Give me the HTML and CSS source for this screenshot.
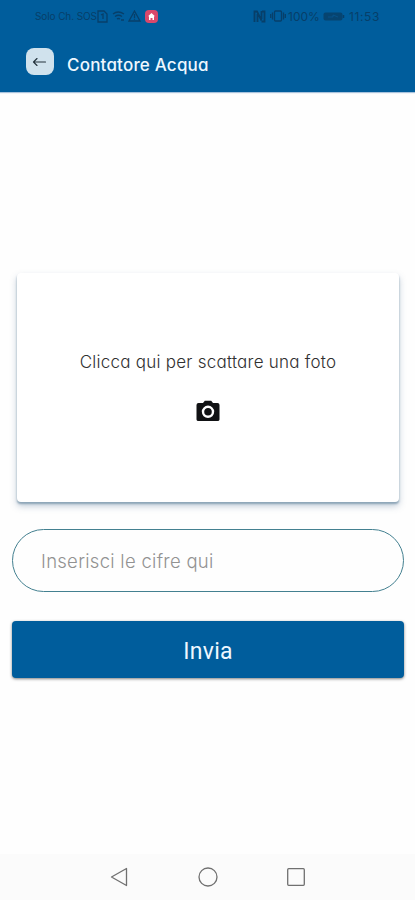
FILE: index.html
```html
<!DOCTYPE html>
<html lang="it">
<head>
<meta charset="utf-8">
<meta name="viewport" content="width=device-width, initial-scale=1">
<title>Contatore Acqua</title>
<link rel="stylesheet" href="styles.css">
</head>
<body>
<div class="screen">
  <header class="header">
    <div class="status">
      <div class="status-left">
        <span class="carrier">Solo Ch. SOS</span>
        <svg width="11" height="13" viewBox="0 0 11 13" fill="none" stroke="currentColor" stroke-width="1.3"><path d="M1 1h6l3 3v8H1zM4 5l2-1v5"/></svg>
        <svg class="wifi" width="13" height="12" viewBox="0 0 13 12" fill="none" stroke="currentColor" stroke-width="1.4"><path d="M1 4q5-4 11 0M3 6.500q3.500-2.500 7 0M5 9q1.500-1 3 0M9 10h3"/></svg>
        <svg class="warning" width="13" height="12" viewBox="0 0 13 12" fill="none" stroke="currentColor" stroke-width="1.3"><path d="M6.500 1L12 11H1zM6.500 4v4M6.500 8.700v1"/></svg>
        <svg class="alert" width="13" height="13" viewBox="0 0 13 13"><rect width="13" height="13" rx="4" fill="#d9486b"/><path d="M6.500 3L10 6.300H9V10H7.500V8h-2v2H4V6.300H3z" fill="#fff"/></svg>
      </div>
      <div class="status-right">
        <svg width="13" height="13" viewBox="0 0 13 13" fill="none" stroke="currentColor" stroke-width="1.800"><path d="M1.500 12V1.500H4l4.500 9M4.500 4v8M8.500 1v8M8.500 11.500h3v-10H9"/></svg>
        <svg class="vibrate" width="16" height="12" viewBox="0 0 16 12" fill="none" stroke="currentColor" stroke-width="1.3"><rect x="4.500" y="1" width="7" height="10" rx="1"/><path d="M2.500 2.500v7M.700 4v4M13.500 2.500v7M15.300 4v4"/></svg>
        <span class="percent">100%</span>
        <svg class="battery" width="22" height="9" viewBox="0 0 22 9"><rect x=".500" y=".500" width="19" height="8" rx="2" fill="currentColor" opacity=".85"/><path d="M20.500 3v3" stroke="currentColor" stroke-width="1.500"/><path d="M5 5h5V3l5 2" stroke="#075b99" fill="none" opacity=".6"/></svg>
        <span class="clock">11:53</span>
      </div>
    </div>
    <div class="title-row">
      <button class="back" aria-label="Indietro">
        <svg width="15" height="12" viewBox="0 0 15 12" fill="none" stroke="#25333d" stroke-width="1.150" stroke-linecap="round" stroke-linejoin="round"><path d="M13.500 6H1.500M5 2.500L1.500 6 5 9.500"/></svg>
      </button>
      <h1 class="title">Contatore Acqua</h1>
    </div>
  </header>
  <main class="content">
    <section class="photo-card">
      <span class="photo-label">Clicca qui per scattare una foto</span>
      <svg class="camera" width="24" height="22" viewBox="0 0 24 22"><path d="M2.500 3H7L8.800.800h6.400L17 3h4.500Q23.500 3 23.500 5v14.500q0 1.500-2 1.500h-19q-2 0-2-1.500V5q0-2 2-2z" fill="#111214"/><circle cx="12" cy="11.800" r="5" fill="none" stroke="#fff" stroke-width="2.400"/></svg>
    </section>
    <div class="field"><span class="placeholder">Inserisci le cifre qui</span></div>
    <button class="submit"><span>Invia</span></button>
  </main>
  <nav class="navbar">
    <svg width="20" height="20" viewBox="0 0 20 20"><path d="M1.500 10L16.500 1.500v17z"/></svg>
    <svg width="20" height="20" viewBox="0 0 20 20"><circle cx="10" cy="10" r="9"/></svg>
    <svg width="20" height="20" viewBox="0 0 20 20"><rect x="1.700" y="1.700" width="16.600" height="16.600" rx="1"/></svg>
  </nav>
</div>
</body>
</html>
```
FILE: styles.css
```css
* {
  box-sizing: border-box;
}

body {
  margin: 0;
  background: #fefefe;
  font-family: Inter, "Liberation Sans", sans-serif;
  font-feature-settings: "cv11" 1;
}

button {
  border: 0;
  padding: 0;
  font-family: inherit;
}

svg {
  display: block;
  flex: none;
}

.screen {
  display: flex;
  flex-direction: column;
  width: 415px;
  height: 900px;
}

.header {
  height: 92px;
  background: #005d9c;
  box-shadow: 0 1px 1px #a9c3dd;
}

.status {
  display: flex;
  justify-content: space-between;
  height: 32px;
  padding: 0 33px 0 35px;
  color: #073f69;
  font-size: 10px;
}

.status-left,
.status-right {
  display: flex;
  align-items: center;
}

.carrier {
  width: 62px;
  letter-spacing: -0.1px;
  white-space: nowrap;
}

.wifi {
  margin-left: 4px;
}

.warning {
  margin-left: 3px;
}

.alert {
  margin-left: 4px;
}

.vibrate {
  margin-left: 4px;
}

.percent {
  width: 32px;
  margin-left: 2px;
  font-size: 12px;
}

.battery {
  margin-left: 3px;
}

.clock {
  width: 33px;
  margin-left: 4px;
  font-size: 12px;
  letter-spacing: 0.6px;
}

.title-row {
  display: flex;
  align-items: center;
  padding: 16px 26px 0;
}

.back {
  display: flex;
  align-items: center;
  justify-content: center;
  width: 28px;
  height: 27px;
  border-radius: 8px;
  background: #d0e2ed;
}

.back svg {
  margin-right: 1px;
}

.title {
  margin: 7px 0 0 13px;
  color: #eef7ff;
  font-size: 17px;
  font-weight: 500;
  line-height: 20px;
  letter-spacing: 0.2px;
  white-space: nowrap;
}

.content {
  display: flex;
  flex: 1;
  flex-direction: column;
  padding: 181px 11px 0 12px;
}

.photo-card {
  display: flex;
  flex-direction: column;
  align-items: center;
  height: 229px;
  margin: 0 5px;
  padding-top: 77px;
  border-radius: 4px;
  background: #fff;
  box-shadow: 0 2px 2px #8ea6b8, 0 4px 7px rgba(75, 105, 140, 0.35);
}

.photo-label {
  color: #303030;
  font-size: 17px;
  font-weight: 300;
  line-height: 24px;
  letter-spacing: 0.25px;
  white-space: nowrap;
}

.camera {
  margin: 26px 1px 0 0;
}

.field {
  display: flex;
  align-items: center;
  height: 63px;
  margin-top: 27px;
  padding-left: 28px;
  border: 1px solid #438090;
  border-radius: 32px;
}

.placeholder {
  color: #929292;
  font-size: 18.5px;
  font-weight: 300;
  letter-spacing: 0.28px;
}

.submit {
  height: 57px;
  margin-top: 29px;
  padding-top: 3px;
  border-radius: 4px;
  background: #005d9c;
  box-shadow: 0 1px 3px rgba(0, 0, 0, 0.5);
  color: #eef7ff;
  font-family: Roboto, sans-serif;
  font-size: 23px;
  font-weight: 400;
  letter-spacing: 0.3px;
}

.navbar {
  display: flex;
  align-items: center;
  justify-content: center;
  gap: 68px;
  height: 46px;
  background: #fbfbfb;
}

.navbar svg {
  fill: none;
  stroke: #707070;
  stroke-width: 1.3;
  stroke-linejoin: round;
}
```
